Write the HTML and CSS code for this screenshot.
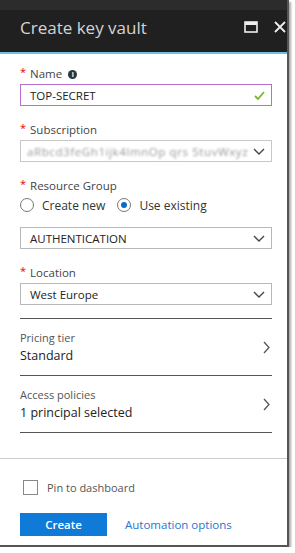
FILE: index.html
```html
<!doctype html>
<html lang="en-us">
  <head>
    <meta charset="utf-8">
    <title>Create key vault</title>
    <link rel="stylesheet" href="styles.css">
  </head>
  <body>
    <div class="blade">
      <div class="blade-head">
        <span class="blade-title">Create key vault</span>
        <span class="head-icons">
          <svg class="ico-max" width="14" height="12" viewBox="0 0 14 12"><rect x="1" y="1" width="12" height="10" fill="none" stroke="#eee" stroke-width="1.6"/><rect x="1" y="1" width="12" height="3" fill="#eee"/></svg>
          <svg class="ico-close" width="12" height="12" viewBox="0 0 12 12"><path d="M1 1L11 11M11 1L1 11" stroke="#eee" stroke-width="1.8"/></svg>
        </span>
      </div>

      <div class="form">
        <div class="field">
          <div class="label"><span class="req">*</span> Name <span class="info">i</span></div>
          <div class="box box-ok">
            <span>TOP-SECRET</span>
            <svg width="11" height="9" viewBox="0 0 11 9"><path d="M1 5L4 8L10 1" fill="none" stroke="#7bb72b" stroke-width="1.8"/></svg>
          </div>
        </div>

        <div class="field">
          <div class="label"><span class="req">*</span> Subscription</div>
          <div class="box box-dim">
            <span class="blur">aRbcd3feGh1ijk4lmnOp qrs 5tuvWxyz</span>
            <svg class="chev" width="12" height="7" viewBox="0 0 12 7"><path d="M1 1L6 6L11 1" fill="none" stroke="#444" stroke-width="1.4"/></svg>
          </div>
        </div>

        <div class="field">
          <div class="label"><span class="req">*</span> Resource Group</div>
          <div class="radios">
            <span class="radio"><span class="dot"></span>Create new</span>
            <span class="radio"><span class="dot on"></span>Use existing</span>
          </div>
          <div class="box">
            <span>AUTHENTICATION</span>
            <svg class="chev" width="12" height="7" viewBox="0 0 12 7"><path d="M1 1L6 6L11 1" fill="none" stroke="#444" stroke-width="1.4"/></svg>
          </div>
        </div>

        <div class="field">
          <div class="label"><span class="req">*</span> Location</div>
          <div class="box">
            <span>West Europe</span>
            <svg class="chev" width="12" height="7" viewBox="0 0 12 7"><path d="M1 1L6 6L11 1" fill="none" stroke="#444" stroke-width="1.4"/></svg>
          </div>
        </div>

        <div class="links">
          <div class="link-row">
            <div>
              <div class="small">Pricing tier</div>
              <div class="val">Standard</div>
            </div>
            <svg width="7" height="13" viewBox="0 0 7 13"><path d="M1 1L6 6.5L1 12" fill="none" stroke="#555" stroke-width="1.3"/></svg>
          </div>
          <div class="link-row">
            <div>
              <div class="small">Access policies</div>
              <div class="val">1 principal selected</div>
            </div>
            <svg width="7" height="13" viewBox="0 0 7 13"><path d="M1 1L6 6.5L1 12" fill="none" stroke="#555" stroke-width="1.3"/></svg>
          </div>
        </div>
      </div>

      <div class="foot">
        <div class="pin"><span class="check"></span>Pin to dashboard</div>
        <div class="actions">
          <span class="btn">Create</span>
          <span class="auto">Automation options</span>
        </div>
      </div>
    </div>
  </body>
</html>
```

FILE: styles.css
```css
html, body
{
  margin: 0;
  padding: 0;
  background: #fff;
}

body
{
  font-family: "Open Sans", "Noto Sans", sans-serif;
  font-size: 11.5px;
  color: #222;
}

.blade
{
  width: 287px;
  height: 545px;
  background: #fff;
  border-right: 2px solid #555;
  border-bottom: 2px solid #555;
  box-shadow: 2px 2px 2px #aaa;
  display: flex;
  flex-direction: column;
}

.blade-head
{
  height: 50px;
  flex: none;
  background: linear-gradient(#2c2c2c 0, #2c2c2c 10px, #202020 10px);
  border-bottom: 2px solid #6cc0e0;
  display: flex;
  align-items: center;
  padding: 2px 1px 0 20px;
}

.blade-title
{
  flex: 1;
  color: #d4d4d4;
  font-size: 17px;
}

.head-icons
{
  display: flex;
  align-items: center;
  gap: 16px;
}

.form
{
  padding: 10px 15px 0 20px;
  flex: 1;
}

.field
{
  margin-bottom: 14px;
}

.label
{
  color: #444;
  height: 20px;
  line-height: 20px;
  display: flex;
  align-items: center;
  gap: 4px;
}

.req
{
  color: #e00;
  font-size: 11px;
  align-self: flex-start;
  line-height: 16px;
}

.info
{
  width: 9px;
  height: 9px;
  border-radius: 50%;
  background: #333;
  color: #fff;
  font-size: 7px;
  font-weight: bold;
  line-height: 9px;
  text-align: center;
  margin-left: 2px;
}

.box
{
  height: 20px;
  border: 1px solid #b8b8b8;
  display: flex;
  align-items: center;
  justify-content: space-between;
  padding: 0 6px 0 9px;
  color: #222;
}

.box-ok
{
  border: 1px solid #b86fd0;
}

.box-dim
{
  border-color: #c8c8c8;
  padding-left: 6px;
}

.blur
{
  color: #999;
  filter: blur(1px);
  letter-spacing: 0.6px;
  white-space: nowrap;
}

.radios
{
  display: flex;
  gap: 12px;
  margin: 0 0 13px 0;
  height: 18px;
  align-items: center;
}

.radio
{
  display: flex;
  align-items: center;
  gap: 8px;
  font-size: 12px;
  color: #333;
}

.dot
{
  width: 12px;
  height: 12px;
  border: 1px solid #777;
  border-radius: 50%;
  position: relative;
}

.dot.on::after
{
  content: "";
  position: absolute;
  left: 3px;
  top: 3px;
  width: 6px;
  height: 6px;
  border-radius: 50%;
  background: #0a6cc8;
}

.links
{
  margin-top: -1px;
  border-top: 1px solid #555;
}

.link-row
{
  height: 56px;
  border-bottom: 1px solid #555;
  display: flex;
  align-items: center;
  justify-content: space-between;
  padding: 0 2px 0 0;
}

.small
{
  color: #555;
  font-size: 11px;
  margin-bottom: 2px;
}

.val
{
  font-size: 12.5px;
  color: #222;
}

.foot
{
  flex: none;
  height: 87px;
  box-sizing: border-box;
  border-top: 1px solid #ccc;
  padding: 21px 0 0 20px;
}

.pin
{
  display: flex;
  align-items: center;
  gap: 9px;
  color: #555;
  margin-left: 3px;
  font-size: 11px;
}

.check
{
  width: 13px;
  height: 13px;
  border: 1px solid #888;
}

.actions
{
  display: flex;
  align-items: center;
  gap: 18px;
  margin-top: 18px;
}

.btn
{
  width: 87px;
  height: 23px;
  line-height: 23px;
  background: #0f7ad8;
  color: #fff;
  text-align: center;
  font-weight: 600;
}

.auto
{
  color: #2476d0;
}
```
